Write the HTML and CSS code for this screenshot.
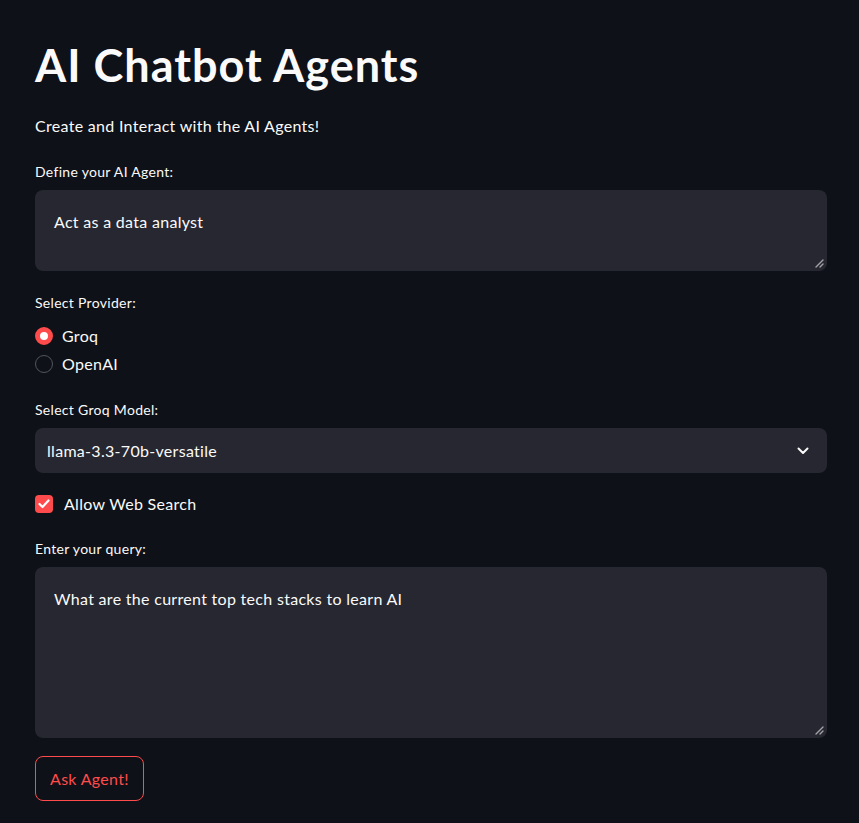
FILE: index.html
```html
<!DOCTYPE html>
<html>
<head>
<meta charset="utf-8">
<link rel="stylesheet" href="styles.css">
</head>
<body>
<main class="app">
  <h1 class="title">AI Chatbot Agents</h1>
  <p class="subtitle">Create and Interact with the AI Agents!</p>

  <section class="field first">
    <label class="label">Define your AI Agent:</label>
    <div class="textarea short">
      <span class="value">Act as a data analyst</span>
      <svg class="grip" width="10" height="10" viewBox="0 0 10 10"><path d="M9 2 L2 9 M9 6 L6 9" stroke="#a3a3a8" stroke-width="1.4" stroke-linecap="round"/></svg>
    </div>
  </section>

  <section class="field">
    <label class="label">Select Provider:</label>
    <div class="radios">
      <div class="radio"><span class="dot on"></span><span>Groq</span></div>
      <div class="radio"><span class="dot"></span><span>OpenAI</span></div>
    </div>
  </section>

  <section class="field model">
    <label class="label">Select Groq Model:</label>
    <div class="select">
      <span>llama-3.3-70b-versatile</span>
      <svg class="chev" width="12" height="8" viewBox="0 0 12 8"><path d="M1.5 1.5 L6 6 L10.5 1.5" fill="none" stroke="#fafafa" stroke-width="2" stroke-linecap="round" stroke-linejoin="round"/></svg>
    </div>
  </section>

  <div class="check">
    <span class="box"><svg width="12" height="10" viewBox="0 0 12 10"><path d="M1.5 5 L4.5 8 L10.5 1.5" fill="none" stroke="#fff" stroke-width="2.2" stroke-linecap="round" stroke-linejoin="round"/></svg></span>
    <span>Allow Web Search</span>
  </div>

  <section class="field query">
    <label class="label">Enter your query:</label>
    <div class="textarea tall">
      <span class="value">What are the current top tech stacks to learn AI</span>
      <svg class="grip" width="10" height="10" viewBox="0 0 10 10"><path d="M9 2 L2 9 M9 6 L6 9" stroke="#a3a3a8" stroke-width="1.4" stroke-linecap="round"/></svg>
    </div>
  </section>

  <button class="btn">Ask Agent!</button>
</main>
</body>
</html>
```
FILE: styles.css
```css
* { box-sizing: border-box; }
html, body { margin: 0; background: #0e1117; }
body {
  font-family: "Lato", "Noto Sans", sans-serif;
  color: #fafafa;
  letter-spacing: 0.3px;
}
.app {
  width: 792px;
  margin-left: 35px;
  padding-top: 37px;
  display: flex;
  flex-direction: column;
}
.title {
  margin: 0;
  font-size: 45px;
  font-weight: 700;
  line-height: 56px;
  letter-spacing: 1px;
}
.subtitle {
  margin: 21px 0 0;
  font-size: 16px;
  line-height: 24px;
}
.field { display: flex; flex-direction: column; margin-top: 22px; }
.field.first { margin-top: 24px; }
.field.model { margin-top: 24px; }
.field.query { margin-top: 23px; }
.label {
  font-size: 14px;
  line-height: 20px;
  margin-bottom: 8px;
}
.textarea {
  position: relative;
  background: #262730;
  border-radius: 8px;
  padding: 20px 19px;
  font-size: 16px;
  line-height: 24px;
}
.short { height: 81px; }
.tall { height: 171px; }
.grip { position: absolute; right: 3px; bottom: 3px; }
.radios { display: flex; flex-direction: column; gap: 4px; margin-top: 3px; }
.radio {
  display: flex; align-items: center; gap: 9px;
  font-size: 16px; line-height: 24px;
}
.dot {
  width: 18px; height: 18px; border-radius: 50%;
  border: 1px solid #53555e;
  background: #0e1117;
}
.dot.on {
  border: 5.5px solid #ff4b4b;
  background: #fff;
}
.select {
  height: 45px;
  background: #262730;
  border-radius: 8px;
  display: flex; align-items: center; justify-content: space-between;
  padding: 0 18px 0 12px;
  font-size: 16px;
}
.check {
  display: flex; align-items: center; gap: 11px;
  margin-top: 19px;
  font-size: 16px; line-height: 24px;
}
.box {
  width: 18px; height: 18px; border-radius: 4px;
  background: #ff4b4b;
  display: flex; align-items: center; justify-content: center;
}
.btn {
  align-self: flex-start;
  margin-top: 18px;
  height: 45px;
  padding: 0 14px;
  background: #0e1117;
  border: 1px solid #ff4b4b;
  border-radius: 8px;
  color: #ff4b4b;
  font-family: inherit;
  font-size: 16px;
  letter-spacing: 0.3px;
}
```
